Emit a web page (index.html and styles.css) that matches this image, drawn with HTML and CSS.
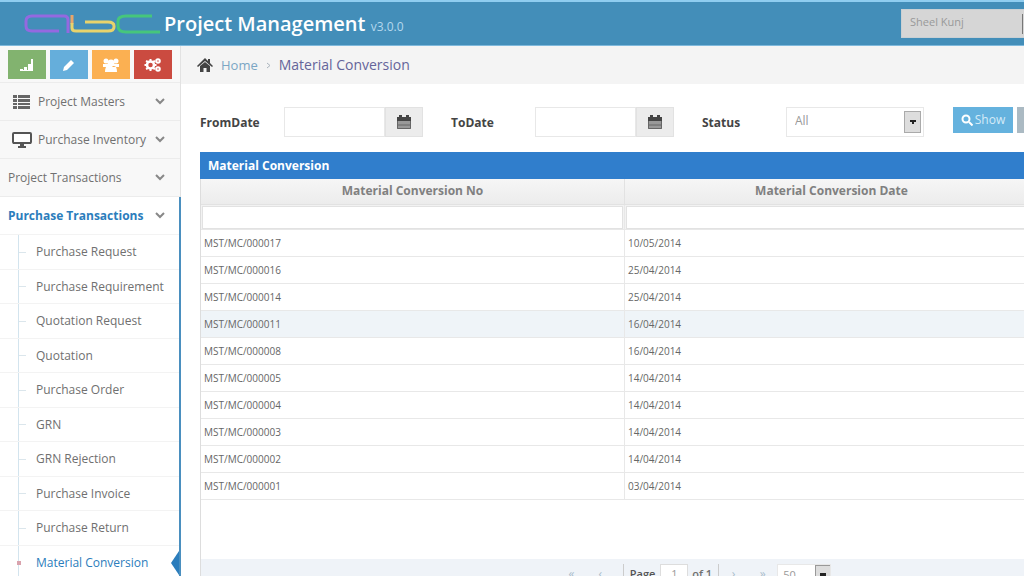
FILE: index.html
```html
<!DOCTYPE html>
<html lang="en">
<head>
<meta charset="utf-8">
<title>Project Management</title>
<link rel="stylesheet" href="styles.css">
</head>
<body>
<header class="topbar">
  <svg class="logo" width="138" height="22" viewBox="0 0 138 22" fill="none" stroke-width="3" stroke-linejoin="round" aria-label="abc">
    <path stroke="#9469e0" d="M44 20V7q0-4-4-4H8Q2 3 2 8v5q0 5 6 5h27"/>
    <path stroke="#e8a56a" d="M48 2v9"/>
    <path stroke="#e8d36c" d="M48 10v5q0 3 4 3h32q6 0 6-4v-1q0-4-6-4H61"/>
    <path stroke="#46c67c" d="M128 3h-26q-8 0-8 5v5q0 6 8 6h34"/>
  </svg>
  <h1 class="brand">Project Management <small class="version">v3.0.0</small></h1>
  <select class="site" aria-label="Site"><option>Sheel Kunj</option></select>
</header>
<div class="layout">
  <nav class="sidebar">
    <div class="shortcuts">
      <button class="shortcut green" aria-label="Statistics"><svg width="16" height="14" viewBox="0 0 16 14" fill="#fff"><path d="M1 13v-2h3v2zM5 13V9h3v4zM9 13V6h3v7zM12 13V1h2v12zM1 12h13v1H1z"/></svg></button>
      <button class="shortcut blue" aria-label="Edit"><svg width="14" height="14" viewBox="0 0 14 14" fill="#fff"><path d="M1 13l1-4 7-7 3 3-7 7z"/></svg></button>
      <button class="shortcut orange" aria-label="Users"><svg width="18" height="16" viewBox="0 0 18 16" fill="#fff"><circle cx="4" cy="4" r="2.500"/><circle cx="14" cy="4" r="2.500"/><circle cx="9" cy="6" r="3.500"/><path d="M1 10V7h5l2 3zM17 10V7h-5l-2 3zM3 15q0-6 3-6h6q3 0 3 6z"/></svg></button>
      <button class="shortcut red" aria-label="Settings"><svg width="18" height="16" viewBox="0 0 18 16" fill="none" stroke="#fff"><circle cx="6.500" cy="8" r="3.500" stroke-width="2.500"/><path stroke-width="2" d="M6.500 2v2M6.500 12v2M.5 8h2M10.500 8h2M2 4l2 1M2 12l2-1M11 4L9 5M11 12l-2-1"/><circle cx="14" cy="4" r="1.800" stroke-width="2"/><circle cx="14" cy="12" r="1.800" stroke-width="2"/></svg></button>
    </div>
    <a class="menu" href="#"><svg class="menu-icon" width="20" height="14" viewBox="0 0 20 14" fill="#666"><path d="M1 0h4v3H1zM6 0h12v3H6zM1 4h4v3H1zM6 4h12v3H6zM1 8h4v2H1zM6 8h12v2H6zM1 11h4v3H1zM6 11h12v3H6z"/></svg><span>Project Masters</span><svg class="chev" width="10" height="7" viewBox="0 0 10 7"><path d="M1 1l4 4 4-4"/></svg></a>
    <a class="menu" href="#"><svg class="menu-icon" width="20" height="16" viewBox="0 0 20 16"><rect x="1" y="1" width="18" height="10" rx="1" fill="#fff" stroke="#555" stroke-width="2"/><path fill="#555" d="M1 10h18v2H1zM8 12h4v2h2v2H6v-2h2z"/></svg><span>Purchase Inventory</span><svg class="chev" width="10" height="7" viewBox="0 0 10 7"><path d="M1 1l4 4 4-4"/></svg></a>
    <a class="menu" href="#"><span>Project Transactions</span><svg class="chev" width="10" height="7" viewBox="0 0 10 7"><path d="M1 1l4 4 4-4"/></svg></a>
    <div class="open">
      <a class="menu current" href="#"><span>Purchase Transactions</span><svg class="chev" width="10" height="7" viewBox="0 0 10 7"><path d="M1 1l4 4 4-4"/></svg></a>
      <ul class="submenu">
        <li><a href="#">Purchase Request</a></li>
        <li><a href="#">Purchase Requirement</a></li>
        <li><a href="#">Quotation Request</a></li>
        <li><a href="#">Quotation</a></li>
        <li><a href="#">Purchase Order</a></li>
        <li><a href="#">GRN</a></li>
        <li><a href="#">GRN Rejection</a></li>
        <li><a href="#">Purchase Invoice</a></li>
        <li><a href="#">Purchase Return</a></li>
        <li class="active"><a href="#">Material Conversion</a></li>
      </ul>
    </div>
  </nav>
  <main class="main">
    <div class="crumbs">
      <svg width="16" height="14" viewBox="0 0 16 14" fill="#444"><path d="M8 0l3 3V1h2v4l3 3-1 1-7-6-7 6-1-1zM8 4l5 4v6H9.500v-4h-3v4H3V8z"/></svg>
      <a href="#">Home</a>
      <svg width="5" height="7" viewBox="0 0 5 7" fill="none" stroke="#aab4bd"><path d="M1 1l3 2.500L1 6"/></svg>
      <span class="here">Material Conversion</span>
    </div>
    <form class="filters">
      <div class="field"><label for="from">FromDate</label><div class="date"><input id="from" type="text"><button type="button" aria-label="Pick from date"><svg width="14" height="14" viewBox="0 0 14 14"><path fill="#444" d="M0 2h2V0h3v2h4V0h3v2h2v4H0z"/><path fill="#999" d="M0 6h14v8H0z"/><path stroke="#666" fill="none" d="M.5 6v7.500h13V6M1 10h12"/></svg></button></div></div>
      <div class="field"><label for="to">ToDate</label><div class="date"><input id="to" type="text"><button type="button" aria-label="Pick to date"><svg width="14" height="14" viewBox="0 0 14 14"><path fill="#444" d="M0 2h2V0h3v2h4V0h3v2h2v4H0z"/><path fill="#999" d="M0 6h14v8H0z"/><path stroke="#666" fill="none" d="M.5 6v7.500h13V6M1 10h12"/></svg></button></div></div>
      <div class="field"><label for="status">Status</label><select id="status" class="status"><option>All</option></select></div>
      <div class="actions">
        <button type="button" class="show"><svg width="12" height="12" viewBox="0 0 12 12" fill="none" stroke="#fff" stroke-width="2"><circle cx="5" cy="5" r="3.500"/><path d="M8 8l3.500 3.500"/></svg>Show</button>
        <button type="button" class="reset" aria-label="Reset"></button>
      </div>
    </form>
    <section class="panel">
      <h2 class="panel-title">Material Conversion</h2>
      <table class="grid">
        <colgroup><col class="col-no"><col></colgroup>
        <thead>
          <tr class="heads"><th>Material Conversion No</th><th>Material Conversion Date</th></tr>
          <tr class="search"><td><input type="text" aria-label="Filter by number"></td><td><input type="text" aria-label="Filter by date"></td></tr>
        </thead>
        <tbody>
          <tr><td>MST/MC/000017</td><td>10/05/2014</td></tr>
          <tr><td>MST/MC/000016</td><td>25/04/2014</td></tr>
          <tr><td>MST/MC/000014</td><td>25/04/2014</td></tr>
          <tr class="hover"><td>MST/MC/000011</td><td>16/04/2014</td></tr>
          <tr><td>MST/MC/000008</td><td>16/04/2014</td></tr>
          <tr><td>MST/MC/000005</td><td>14/04/2014</td></tr>
          <tr><td>MST/MC/000004</td><td>14/04/2014</td></tr>
          <tr><td>MST/MC/000003</td><td>14/04/2014</td></tr>
          <tr><td>MST/MC/000002</td><td>14/04/2014</td></tr>
          <tr><td>MST/MC/000001</td><td>03/04/2014</td></tr>
        </tbody>
      </table>
      <div class="pager">
        <button aria-label="First page">«</button>
        <button aria-label="Previous page">‹</button>
        <label class="page">Page <input type="text" value="1"></label>
        <span class="total">of 1</span>
        <button aria-label="Next page">›</button>
        <button aria-label="Last page">»</button>
        <select class="size" aria-label="Rows per page"><option>50</option></select>
      </div>
    </section>
  </main>
</div>
</body>
</html>
```
FILE: styles.css
```css
* { box-sizing: border-box; }
body {
  margin: 0;
  height: 100vh;
  overflow: hidden;
  display: flex;
  flex-direction: column;
  background: #fff;
  color: #707070;
  font: 12px/18px "Open Sans", sans-serif;
}
button, input, select { font: inherit; color: inherit; margin: 0; border-radius: 0; }
a { color: inherit; text-decoration: none; }
svg { flex: none; }

.topbar {
  flex: none;
  height: 46px;
  display: flex;
  align-items: center;
  padding-left: 24px;
  background: #438eb9;
  border-top: 2px solid #8fcdf0;
  border-bottom: 1px solid #7fb9dc;
  overflow: hidden;
}
.logo { flex: none; }
.brand {
  flex: 1;
  margin: 0 0 0 2px;
  padding-top: 3px;
  color: #fff;
  font-size: 20px;
  line-height: 28px;
  font-weight: 600;
  white-space: nowrap;
}
.version { font-size: 12px; font-weight: 400; color: #b5d8ee; }
select {
  appearance: none;
  border: 1px solid #e8e8e8;
  outline: 0;
}
.site {
  flex: none;
  width: 140px;
  height: 29px;
  margin-right: -17px;
  padding: 0 8px 4px;
  border-color: #c9d0d4;
  color: #999;
  font-size: 11px;
  background: linear-gradient(#777, #777) 120px 4px / 1px 20px no-repeat #d6d6d6;
}

.layout { flex: 1; min-height: 0; display: flex; }
.sidebar {
  flex: none;
  width: 181px;
  background: #f8f8f8;
  border-right: 1px solid #e2e2e2;
}
.shortcuts {
  display: flex;
  gap: 4px;
  padding: 4px 8px 3px;
  border-bottom: 1px solid #ececec;
}
.shortcut {
  width: 38px;
  height: 29px;
  padding: 0;
  border: 0;
  display: flex;
  align-items: center;
  justify-content: center;
}
.green { background: #82b36f; }
.blue { background: #65aedb; }
.orange { background: #fbb052; }
.red { background: #cb4b40; }
.menu {
  height: 38px;
  display: flex;
  align-items: center;
  padding: 0 15px 0 8px;
  border-bottom: 1px solid #ececec;
  white-space: nowrap;
}
.menu span { flex: 1; }
.menu-icon { margin: 0 6px 0 4px; }
.chev { fill: none; stroke: #888; stroke-width: 2; }
.open {
  background: #fff;
  margin-right: -1px;
  border-right: 2px solid #4a8fbf;
}
.current { color: #2b7dbc; font-weight: 700; border-bottom-color: #f3f3f3; padding-right: 14px; }
.submenu {
  list-style: none;
  margin: 0;
  padding: 0;
  height: 345px;
  display: grid;
  grid-template-rows: repeat(10, 1fr);
  background: linear-gradient(#d3e4ee, #d3e4ee) 18px 0 / 1px 100% no-repeat;
}
.submenu li {
  position: relative;
  display: flex;
  align-items: center;
  padding: 1px 0 0 36px;
  border-bottom: 1px solid #f3f3f3;
}
.submenu li::before {
  content: "";
  position: absolute;
  left: 19px;
  width: 7px;
  border-top: 1px solid #dbe6ec;
}
.submenu .active { color: #2b7dbc; }
.submenu .active::before { left: 17px; width: 4px; border-top: 4px solid #d9a3ad; }
.submenu .active::after {
  content: "";
  position: absolute;
  right: 0;
  border: solid transparent;
  border-width: 12px 8px 12px 0;
  border-right-color: #2b7dbc;
}

.main { flex: 1; min-width: 0; display: flex; flex-direction: column; overflow: hidden; }
.crumbs {
  flex: none;
  height: 38px;
  display: flex;
  align-items: center;
  gap: 8px;
  padding-left: 16px;
  background: #f4f4f4;
  font-size: 13px;
}
.crumbs a { color: #7ba6c4; }
.here { color: #65649a; font-size: 14px; }
.filters {
  flex: none;
  display: flex;
  padding: 23px 0 15px 19px;
}
.field { flex: none; width: 251px; display: flex; align-items: center; }
.field label { width: 84px; padding-top: 2px; color: #444; font-weight: 700; }
.date { width: 139px; height: 30px; display: flex; }
.date input { flex: 1; min-width: 0; border: 1px solid #e8e8e8; padding: 0 6px; }
.date button {
  width: 38px;
  padding: 0;
  border: 1px solid #e2e2e2;
  background: #ececec;
  display: flex;
  align-items: center;
  justify-content: center;
}
.status {
  width: 138px;
  height: 30px;
  padding: 0 8px 2px;
  color: #999;
  background:
    linear-gradient(#222, #222) 123px 12px / 6px 2px no-repeat,
    linear-gradient(#222, #222) 125px 14px / 2px 2px no-repeat,
    linear-gradient(#ddd, #ddd) 118px 4px / 15px 20px no-repeat,
    linear-gradient(#aaa, #aaa) 117px 3px / 17px 22px no-repeat #fff;
}
.actions { flex: none; display: flex; align-items: flex-start; gap: 4px; }
.show, .reset {
  height: 26px;
  border: 0;
  color: #d5ebf8;
  background: #65b2de;
}
.show { width: 60px; display: flex; align-items: center; justify-content: center; gap: 2px; padding: 0; }
.reset { width: 60px; background: #abbac3; }

.panel {
  flex: 1;
  min-height: 0;
  display: flex;
  flex-direction: column;
  margin: 0 -15px 0 19px;
  border-left: 1px solid #ddd;
}
.panel-title {
  flex: none;
  margin: 0 0 0 -1px;
  padding: 0 8px;
  height: 27px;
  font-size: 12px;
  line-height: 27px;
  font-weight: 700;
  color: #fff;
  background: #307ecc;
}
.grid { width: 100%; table-layout: fixed; border-collapse: separate; border-spacing: 0; font-size: 10px; line-height: 14px; }
.col-no { width: 424px; }
.grid th {
  height: 26px;
  padding: 0 0 2px;
  color: #808080;
  font-size: 12px;
  font-weight: 700;
  background: linear-gradient(#f6f6f6, #ececec);
  border-right: 1px solid #e2e2e2;
  border-bottom: 1px solid #e2e2e2;
}
.grid td { height: 27px; padding: 0 3px; border-right: 1px solid #e8e8e8; border-bottom: 1px solid #e8e8e8; color: #666; }
.grid .search td { height: 25px; padding: 0 1px; background: #f2f2f2; }
.search input { display: block; width: 100%; height: 23px; border: 1px solid #e2e2e2; background: #fff; }
.grid .hover td { background: #eff4f8; }
.pager {
  flex: none;
  margin-top: auto;
  height: 17px;
  display: flex;
  align-items: flex-start;
  justify-content: center;
  padding: 5px 0 0 148px;
  background: #eff3f8;
  line-height: 20px;
}
.pager button { width: 29px; padding: 0; border: 0; background: none; color: #a9bccb; line-height: 20px; }
.page { border-left: 1px solid #ccc; padding-left: 6px; margin-left: 8px; font-weight: 600; font-size: 11px; color: #555; }
.page input { width: 28px; height: 20px; margin: 0 4px 0 2px; padding: 0; border: 1px solid #ddd; text-align: center; color: #999; font-weight: 400; }
.total { border-right: 1px solid #ccc; padding-right: 6px; font-size: 11px; font-weight: 600; }
.size {
  width: 54px;
  height: 20px;
  padding: 0 5px;
  color: #999;
  font-size: 11px;
  background:
    linear-gradient(#222, #222) 42px 8px / 6px 4px no-repeat,
    linear-gradient(#ddd, #ddd) 38px 1px / 14px 16px no-repeat,
    linear-gradient(#999, #999) 37px 0 / 16px 18px no-repeat #fff;
}
```
